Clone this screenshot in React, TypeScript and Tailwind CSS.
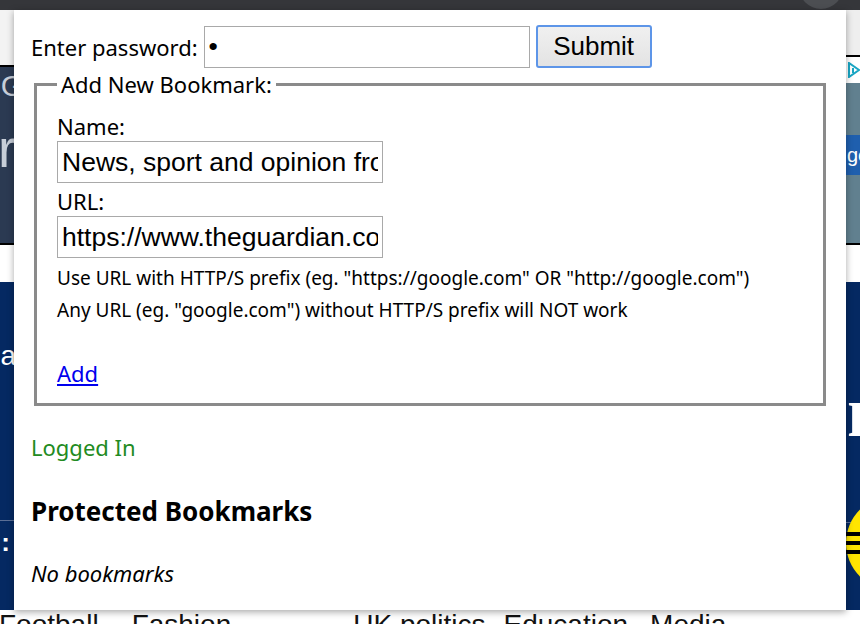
import { useState } from "react";

function LeftStrip() {
  return (
    <div className="w-[14px] flex flex-col shrink-0 overflow-hidden">
      <div className="h-[55px] bg-[#f3f3f3]" />
      <div className="h-[2px] bg-black" />
      <div className="h-[176px] bg-[#2b3a52] flex flex-col items-end overflow-hidden font-['Liberation_Sans',sans-serif] text-[#c7ced8]">
        <div className="text-[30px] leading-[30px] mt-[4px] -mr-[10px]">G</div>
        <div className="text-[54px] leading-[54px] mt-[20px] -mr-[2px]">r</div>
      </div>
      <div className="h-[2px] bg-black" />
      <div className="h-[37px] bg-white" />
      <div className="flex-1 bg-[#052962] flex flex-col items-end overflow-hidden font-['Liberation_Sans',sans-serif] text-white">
        <div className="text-[28px] leading-[28px] mt-[60px] -mr-[2px]">a</div>
        <div className="h-px bg-[#5b6f96] w-full mt-[150px]" />
        <div className="text-[26px] leading-[26px] mt-[8px] mr-[4px] font-bold">:</div>
      </div>
    </div>
  );
}

function RightStrip() {
  return (
    <div className="w-[14px] flex flex-col shrink-0 overflow-hidden">
      <div className="h-[45px] bg-[#eeeeee]" />
      <div className="h-[2px] bg-black" />
      <div className="h-[26px] bg-white flex items-center pl-[2px]">
        <svg width="12" height="16" viewBox="0 0 12 16">
          <path d="M1 1 L1 15 L11 8 Z" fill="none" stroke="#19a6c4" strokeWidth="2" />
          <rect x="4" y="6" width="2" height="5" fill="#19a6c4" />
        </svg>
      </div>
      <div className="h-[160px] bg-[#61808f] flex flex-col overflow-hidden">
        <div className="mt-[52px] h-[40px] bg-[#1f5fae] flex items-center text-white font-['Liberation_Sans',sans-serif] text-[20px] -mr-[20px] pl-[1px]">
          ge
        </div>
      </div>
      <div className="h-[2px] bg-black" />
      <div className="h-[37px] bg-white" />
      <div className="flex-1 bg-[#052962] flex flex-col overflow-hidden">
        <div className="font-['Liberation_Serif',serif] text-white text-[72px] leading-[60px] mt-[100px] pl-[1px] font-bold">n</div>
        <div className="h-px bg-[#5b6f96] mt-[80px]" />
        <div className="-mt-[27px] w-[96px] h-[94px] rounded-full bg-[#ffe500] flex flex-col justify-center gap-[5px]">
          <div className="h-[4px] bg-black" />
          <div className="h-[4px] bg-black" />
          <div className="h-[4px] bg-black" />
        </div>
      </div>
    </div>
  );
}

export default function App() {
  const [password, setPassword] = useState("a");
  const [name, setName] = useState("News, sport and opinion from the Guardian's global edition");
  const [url, setUrl] = useState("https://www.theguardian.com/international");

  const inputClass =
    "w-[326px] h-[42px] border border-[#a9a9a9] bg-white px-[4px] font-['Liberation_Sans',Arial,sans-serif] text-[26.5px] text-black outline-none";

  return (
    <div className="relative w-[860px] h-[624px] overflow-hidden bg-white">
      <div className="flex flex-col h-full">
        <div className="h-[10px] bg-[#35363a] flex justify-end pr-[17px] overflow-hidden">
          <div className="w-[44px] h-[44px] rounded-full bg-[#4c4e52] -mt-[35px] shrink-0" />
        </div>
        <div className="flex flex-1">
          <LeftStrip />
          <div className="flex-1 bg-white" />
          <RightStrip />
        </div>
        <div className="h-[14px] bg-white overflow-hidden flex font-['Liberation_Sans',sans-serif] text-[28px] leading-[30px] text-[#121212] whitespace-nowrap">
          <span className="-ml-[1px]">Football</span>
          <span className="ml-[33px]">Fashion</span>
          <span className="ml-[122px]">UK politics</span>
          <span className="ml-[18px]">Education</span>
          <span className="ml-[22px]">Media</span>
        </div>
      </div>

      <div className="absolute left-[14px] top-[10px] w-[832px] h-[600px] bg-white shadow-[0_2px_7px_rgba(0,0,0,0.35)] px-[17px] pt-[15px] font-['Noto_Sans',sans-serif] text-[22px] text-black">
        <div className="flex items-center h-[43px]">
          <label className="leading-[30px]">Enter password:</label>
          <input
            type="password"
            value={password}
            onChange={(e) => setPassword(e.target.value)}
            className={`ml-[6px] ${inputClass}`}
          />
          <button className="ml-[6px] w-[116px] h-[43px] rounded-[3px] border-2 border-[#5d95e8] bg-gradient-to-b from-[#f0f0f0] to-[#e3e3e3] font-['Liberation_Sans',Arial,sans-serif] text-[26px] text-black">
            Submit
          </button>
        </div>

        <fieldset className="mx-[3px] border-[3px] border-[#8a8a8a] px-[20px] pt-[11px] pb-[15px]">
          <legend className="px-[4px] leading-[32px]">Add New Bookmark:</legend>
          <div className="leading-[30px]">Name:</div>
          <input value={name} onChange={(e) => setName(e.target.value)} className={`block ${inputClass}`} />
          <div className="leading-[30px] mt-[3px]">URL:</div>
          <input value={url} onChange={(e) => setUrl(e.target.value)} className={`block ${inputClass}`} />
          <div className="mt-[4px] text-[19px] leading-[32px]">
            Use URL with HTTP/S prefix (eg. "https://google.com" OR "http://google.com")
          </div>
          <div className="text-[19px] leading-[32px]">
            Any URL (eg. "google.com") without HTTP/S prefix will NOT work
          </div>
          <a href="#" className="block w-fit mt-[32px] leading-[30px] text-[#0000ee] underline">
            Add
          </a>
        </fieldset>

        <div className="mt-[26px] leading-[30px] text-[#228b22]">Logged In</div>
        <h3 className="mt-[31px] text-[26px] font-bold leading-[36px]">Protected Bookmarks</h3>
        <div className="mt-[29px] leading-[30px] italic">No bookmarks</div>
      </div>
    </div>
  );
}
